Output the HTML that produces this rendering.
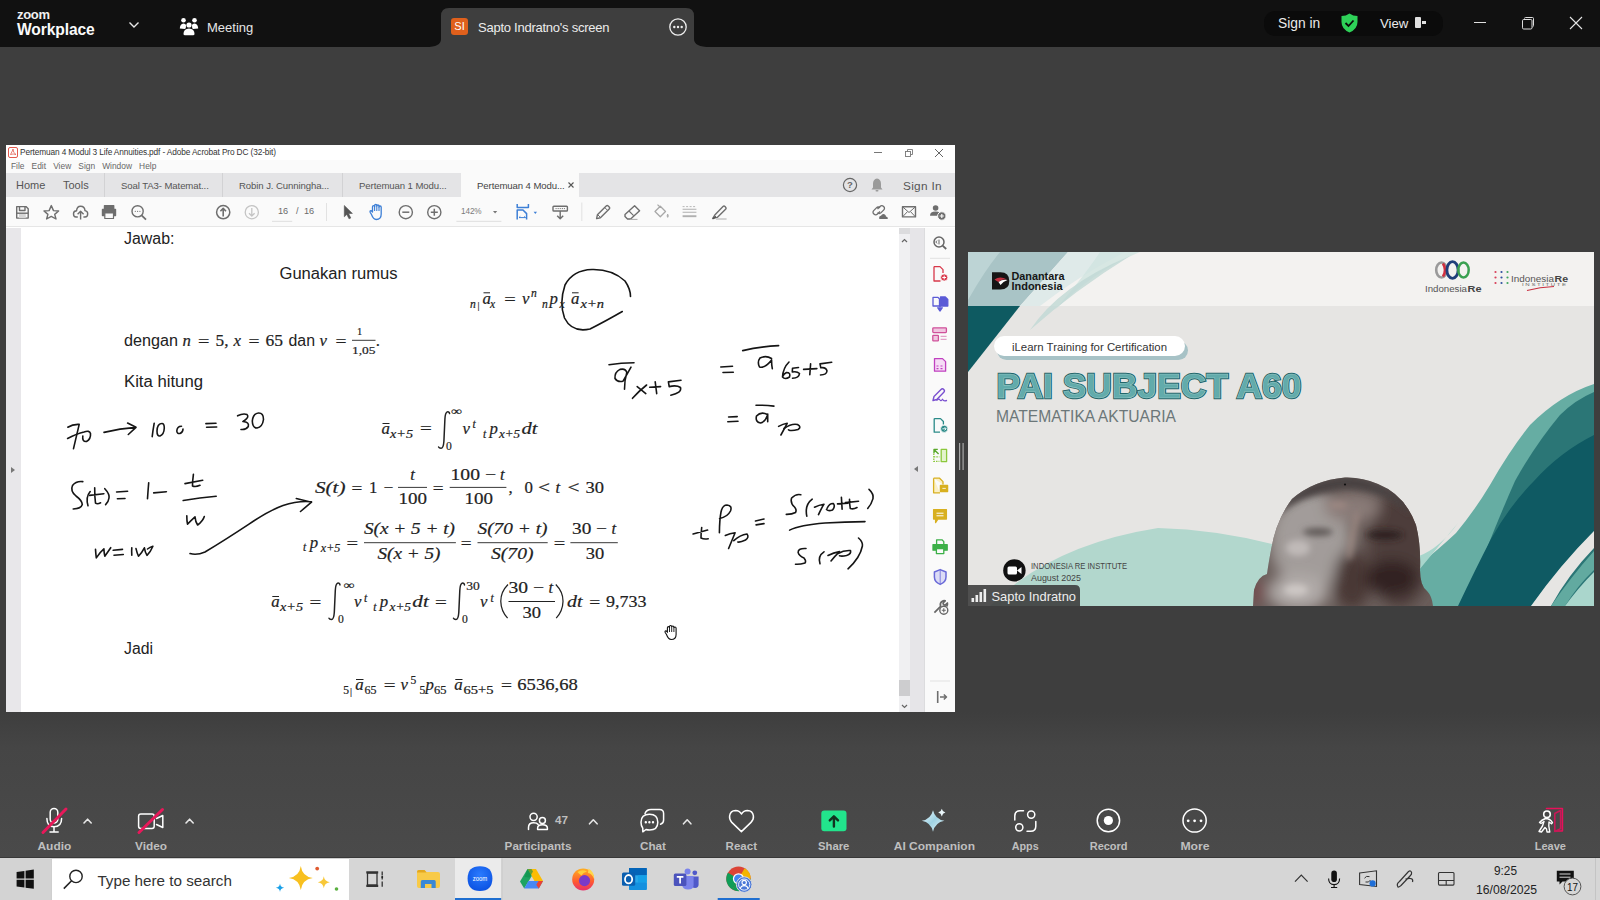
<!DOCTYPE html>
<html><head><meta charset="utf-8">
<style>
*{margin:0;padding:0;box-sizing:border-box}
html,body{width:1600px;height:900px;overflow:hidden;background:#3e3e3e;font-family:"Liberation Sans",sans-serif}
.a{position:absolute}
#top{left:0;top:0;width:1600px;height:47px;background:#111111}
#main{left:0;top:47px;width:1600px;height:811px;background:linear-gradient(#3e3e3e 0,#3e3e3e 665px,#454545 700px,#4a4a4a 811px)}
#acro{left:6px;top:145px;width:949px;height:567px;background:#fff}
#vid{left:968px;top:252px;width:626px;height:354px;background:#e6e6e4;overflow:hidden}
#task{left:0;top:857px;width:1600px;height:43px;background:#d6d6d6;border-top:1px solid #383838}
.t{position:absolute;white-space:nowrap}
</style></head><body>
<div id="main" class="a"></div>
<div id="top" class="a">
 <div class="t" style="left:17px;top:7px;font-size:13px;color:#f0f0f0;font-weight:bold;letter-spacing:-0.3px">zoom</div>
 <div class="t" style="left:17px;top:21px;font-size:15.6px;color:#fafafa;font-weight:bold;letter-spacing:-0.1px">Workplace</div>
 <svg class="a" style="left:128px;top:20px" width="12" height="10"><path d="M1.5 2.5 L6 7 L10.5 2.5" stroke="#e8e8e8" stroke-width="1.4" fill="none"/></svg>
 <svg class="a" style="left:179px;top:17px" width="20" height="19" viewBox="0 0 20 19"><circle cx="4.5" cy="3.2" r="2.3" fill="#fff"/><circle cx="15.5" cy="3.2" r="2.3" fill="#fff"/><circle cx="10" cy="8" r="2.6" fill="#fff"/><path d="M0.8 11.5 Q1 6.8 4.5 6.5 Q6.5 6.5 7 8 Q7.2 11 6 12 Z" fill="#fff"/><path d="M19.2 11.5 Q19 6.8 15.5 6.5 Q13.5 6.5 13 8 Q12.8 11 14 12 Z" fill="#fff"/><path d="M4.5 17 Q4.5 12 10 11.6 Q15.5 12 15.5 17 Q15.5 18.2 14 18.2 L6 18.2 Q4.5 18.2 4.5 17Z" fill="#fff"/></svg>
 <div class="t" style="left:207px;top:20px;font-size:13px;color:#e6e6e6">Meeting</div>
 <svg class="a" style="left:426px;top:8px" width="284" height="39" viewBox="0 0 284 39"><path d="M0 39 Q15 39 15 31 L15 8 Q15 0 23 0 L260 0 Q268 0 268 8 L268 31 Q268 39 284 39 Z" fill="#3e3e3e"/></svg>
 <div class="a" style="left:451px;top:18px;width:17px;height:17px;background:#e0601c;border-radius:3px;color:#fff;font-size:11px;line-height:17px;text-align:center">SI</div>
 <div class="t" style="left:478px;top:20px;font-size:13px;color:#ececec;letter-spacing:-0.25px">Sapto Indratno's screen</div>
 <svg class="a" style="left:668px;top:17px" width="20" height="20"><circle cx="10" cy="10" r="8.2" stroke="#eee" stroke-width="1.3" fill="none"/><circle cx="6.3" cy="10" r="1.2" fill="#eee"/><circle cx="10" cy="10" r="1.2" fill="#eee"/><circle cx="13.7" cy="10" r="1.2" fill="#eee"/></svg>
 <div class="a" style="left:1264px;top:11px;width:179px;height:25px;background:#0b0b0b;border-radius:11px"></div>
 <div class="t" style="left:1278px;top:16px;font-size:13.8px;color:#eaeaea">Sign in</div>
 <svg class="a" style="left:1340px;top:13px" width="19" height="20" viewBox="0 0 19 20"><path d="M9.5 0.5 Q13 3 17.5 3 L17.5 9 Q17.5 16 9.5 19.5 Q1.5 16 1.5 9 L1.5 3 Q6 3 9.5 0.5Z" fill="#2ed158"/><path d="M5.5 10 L8.5 13 L13.5 7.5" stroke="#0b0b0b" stroke-width="1.8" fill="none"/></svg>
 <div class="t" style="left:1380px;top:16px;font-size:13.2px;color:#eaeaea">View</div>
 <div class="a" style="left:1415px;top:17px;width:6px;height:11px;background:#e0e0e0;border-radius:1px"></div>
 <div class="a" style="left:1422px;top:21px;width:4px;height:3px;background:#e0e0e0"></div>
 <div class="a" style="left:1474px;top:22px;width:12px;height:1px;background:#e0e0e0"></div>
 <svg class="a" style="left:1520px;top:15px" width="16" height="16"><rect x="2.5" y="4.5" width="9.5" height="9.5" rx="1.2" stroke="#ddd" stroke-width="1" fill="none"/><path d="M4.5 3.5 Q4.5 2.5 5.5 2.5 L12.5 2.5 Q13.5 2.5 13.5 3.5 L13.5 10.5 Q13.5 11.5 12.5 12" stroke="#ddd" stroke-width="1" fill="none"/></svg>
 <svg class="a" style="left:1569px;top:16px" width="14" height="14"><path d="M1 1 L13 13 M13 1 L1 13" stroke="#e6e6e6" stroke-width="1.1"/></svg>
</div>
<div id="acro" class="a">
 <!-- title bar: abs coords offset by (6,145) -->
 <div class="a" style="left:0;top:0;width:949px;height:15px;background:#fff"></div>
 <svg class="a" style="left:2px;top:2px" width="10" height="11"><rect x="0.5" y="0.5" width="9" height="10" rx="1.5" fill="#fff" stroke="#e0473a" stroke-width="0.9"/><path d="M2.5 7.5 Q5 3 5 2 Q5 6 8 7.5 Q5 6.5 2.5 7.5Z" fill="none" stroke="#e0473a" stroke-width="0.7"/></svg>
 <div class="t" style="left:14px;top:2px;font-size:8.3px;color:#333;letter-spacing:-0.12px">Pertemuan 4 Modul 3 Life Annuities.pdf - Adobe Acrobat Pro DC (32-bit)</div>
 <div class="a" style="left:868px;top:7px;width:8px;height:1px;background:#777"></div>
 <svg class="a" style="left:898px;top:3px" width="10" height="10"><rect x="1.5" y="3.5" width="5" height="5" fill="none" stroke="#777" stroke-width="0.9"/><path d="M3.5 3.5 V1.5 H8.5 V6.5 H6.5" fill="none" stroke="#777" stroke-width="0.9"/></svg>
 <svg class="a" style="left:928px;top:3px" width="10" height="10"><path d="M1 1 L9 9 M9 1 L1 9" stroke="#666" stroke-width="1"/></svg>
 <!-- menu bar -->
 <div class="a" style="left:0;top:15px;width:949px;height:13px;background:#fafafa"></div>
 <div class="t" style="left:5px;top:16px;font-size:8.4px;color:#666;word-spacing:4.8px">File Edit View Sign Window Help</div>
 <!-- tab bar -->
 <div class="a" style="left:0;top:28px;width:949px;height:24px;background:#e4e4e6"></div>
 <div class="t" style="left:10px;top:34px;font-size:11px;color:#555">Home</div>
 <div class="t" style="left:57px;top:34px;font-size:11px;color:#555">Tools</div>
 <div class="a" style="left:98px;top:28px;width:1px;height:24px;background:#d2d2d4"></div>
 <div class="t" style="left:115px;top:35px;font-size:9.6px;color:#555;letter-spacing:-0.1px">Soal TA3- Matemat...</div>
 <div class="a" style="left:216px;top:28px;width:1px;height:24px;background:#d2d2d4"></div>
 <div class="t" style="left:233px;top:35px;font-size:9.6px;color:#555;letter-spacing:-0.1px">Robin J. Cunningha...</div>
 <div class="a" style="left:336px;top:28px;width:1px;height:24px;background:#d2d2d4"></div>
 <div class="t" style="left:353px;top:35px;font-size:9.6px;color:#555;letter-spacing:-0.1px">Pertemuan 1 Modu...</div>
 <div class="a" style="left:455px;top:28px;width:118px;height:24px;background:#fafafa"></div>
 <div class="t" style="left:471px;top:35px;font-size:9.6px;color:#444;letter-spacing:-0.1px">Pertemuan 4 Modu...</div>
 <svg class="a" style="left:561px;top:36px" width="8" height="8"><path d="M1.5 1.5 L6.5 6.5 M6.5 1.5 L1.5 6.5" stroke="#555" stroke-width="1.1"/></svg>
 <svg class="a" style="left:836px;top:32px" width="16" height="16"><circle cx="8" cy="8" r="6.6" fill="none" stroke="#666" stroke-width="1.2"/><text x="8" y="11.3" font-size="9.5" text-anchor="middle" fill="#666" font-family="Liberation Sans" font-weight="bold">?</text></svg>
 <svg class="a" style="left:864px;top:32px" width="14" height="16"><path d="M7 1.5 Q11 2 11 7 L11 10.5 L12.5 12.5 L1.5 12.5 L3 10.5 L3 7 Q3 2 7 1.5Z" fill="#9a9a9a"/><rect x="5.5" y="13" width="3" height="1.6" rx="0.8" fill="#9a9a9a"/></svg>
 <div class="t" style="left:897px;top:34px;font-size:11.8px;color:#555;letter-spacing:0.3px">Sign In</div>
 <!-- toolbar -->
 <div class="a" style="left:0;top:52px;width:949px;height:30px;background:#fafafa;border-bottom:1px solid #e6e6e6"></div>
 <div id="tb"></div>
 <!-- doc area -->
 <div class="a" style="left:0;top:83px;width:15px;height:484px;background:#e8e7ea"></div>
 <div class="a" style="left:5px;top:322px;width:0;height:0;border-top:3.5px solid transparent;border-bottom:3.5px solid transparent;border-left:4px solid #777"></div>
 <div class="a" style="left:15px;top:83px;width:878px;height:484px;background:#fff"></div>
 <div class="a" style="left:893px;top:83px;width:11px;height:484px;background:#f0f0f2"></div>
 <div class="a" style="left:893px;top:83px;width:11px;height:6px;background:#dcdcde"></div>
 <svg class="a" style="left:894px;top:92px" width="9" height="7"><path d="M2 5 L4.5 2.5 L7 5" stroke="#666" stroke-width="1.2" fill="none"/></svg>
 <div class="a" style="left:893px;top:535px;width:11px;height:16px;background:#cdcdcf"></div>
 <svg class="a" style="left:894px;top:558px" width="9" height="7"><path d="M2 2 L4.5 4.5 L7 2" stroke="#666" stroke-width="1.2" fill="none"/></svg>
 <div class="a" style="left:904px;top:83px;width:15px;height:484px;background:#e6e5e8;border-right:1px solid #dcdcde"></div>
 <div class="a" style="left:908px;top:321px;width:0;height:0;border-top:3.5px solid transparent;border-bottom:3.5px solid transparent;border-right:4px solid #777"></div>
 <div class="a" style="left:919px;top:83px;width:30px;height:484px;background:#fafafa"></div>
 <div id="rp"></div>
 <div id="doc"></div>
</div>
<div id="vid" class="a">
<svg class="a" style="left:0;top:0" width="626" height="354" viewBox="968 252 626 354">
 <defs>
  <filter id="bl1" x="-20%" y="-20%" width="140%" height="140%"><feGaussianBlur stdDeviation="6"/></filter>
  <filter id="bl2" x="-20%" y="-20%" width="140%" height="140%"><feGaussianBlur stdDeviation="3"/></filter>
  <filter id="bl3"><feGaussianBlur stdDeviation="0.6"/></filter>
  <filter id="hb" filterUnits="userSpaceOnUse" x="1200" y="440" width="280" height="200"><feGaussianBlur stdDeviation="7"/></filter>
  <filter id="hb2" filterUnits="userSpaceOnUse" x="1200" y="440" width="280" height="200"><feGaussianBlur stdDeviation="3"/></filter>
  <clipPath id="headclip"><path d="M1345 477.5 Q1314 480 1292 499 Q1276 520 1271 550 Q1268 566 1267 574 Q1258 576 1254 590 L1253 606 L1433 606 Q1432 596 1427 591 Q1420 586 1420 570 Q1421 545 1416 525 Q1405 495 1378 484 Q1362 477 1345 477.5Z"/></clipPath>
 </defs>
 <rect x="968" y="252" width="626" height="354" fill="#e6e5e3"/>
 <!-- header -->
 <rect x="968" y="252" width="626" height="54" fill="#f3f2f0"/>
 <path d="M968 252 L1068 252 L1020 306 L968 306 Z" fill="#a9c4c6"/>
 <path d="M968 252 L1000 252 Q985 270 968 300 Z" fill="#c6dcdc" opacity="0.7"/>
 <path d="M1068 252 L1125 252 Q1080 275 1040 306 L1020 306 Z" fill="#dfeae9"/>
 <path d="M1100 252 L1140 252 Q1095 270 1055 310 Q1085 275 1100 252Z" fill="#cfe3e0" opacity="0.8"/>
 <path d="M1030 330 Q1060 285 1130 256 Q1075 290 1030 330Z" fill="#c0d8d4" opacity="0.8"/>
 <path d="M968 306 L1020 306 L968 372 Z" fill="#0e5a61"/>
 <!-- Danantara logo -->
 <path d="M992 272.2 H1000.5 Q1009.3 272.2 1009.3 281 Q1009.3 289.6 1000.5 289.6 H992 Z" fill="#151515"/>
 <path d="M994.5 279.5 Q1000 275.5 1007 279.5 Q1002 278.5 998.5 282 Q996 280.5 994.5 279.5Z" fill="#c03040"/>
 <path d="M998.5 282 Q1002.5 279 1007.5 280 Q1003 281.5 1000.5 285 Z" fill="#fff"/>
 <text x="1011.5" y="280.2" font-family="Liberation Sans" font-weight="bold" font-size="10.3" fill="#161616" textLength="53" lengthAdjust="spacingAndGlyphs">Danantara</text>
 <text x="1011.5" y="289.8" font-family="Liberation Sans" font-weight="bold" font-size="10.3" fill="#161616" textLength="51" lengthAdjust="spacingAndGlyphs">Indonesia</text>
 <!-- IndonesiaRe logo -->
 <ellipse cx="1441.5" cy="270" rx="5.3" ry="7.5" fill="none" stroke="#9a9a9a" stroke-width="2.6"/>
 <path d="M1443 263.5 Q1447 270 1443 276.5" fill="none" stroke="#d03040" stroke-width="2.6"/>
 <ellipse cx="1452.5" cy="270" rx="5.6" ry="8.3" fill="none" stroke="#1f3f7a" stroke-width="2.8"/>
 <ellipse cx="1463.5" cy="270" rx="5.2" ry="7.5" fill="none" stroke="#3aa050" stroke-width="2.5"/>
 <text x="1425" y="292" font-family="Liberation Sans" font-size="9.6" fill="#555" textLength="42" lengthAdjust="spacingAndGlyphs">Indonesia</text>
 <text x="1467.5" y="292" font-family="Liberation Sans" font-weight="bold" font-size="9.6" fill="#444" textLength="14" lengthAdjust="spacingAndGlyphs">Re</text>
 <g fill="#d8405a"><circle cx="1495.5" cy="272" r="1.1"/><circle cx="1495.5" cy="277.5" r="1.1"/><circle cx="1495.5" cy="283" r="1.1"/></g>
 <g fill="#3050a0"><circle cx="1501.5" cy="272" r="1.1"/><circle cx="1501.5" cy="277.5" r="1.1"/><circle cx="1501.5" cy="283" r="1.1"/></g>
 <g fill="#40a860"><circle cx="1507.5" cy="272" r="1.1"/><circle cx="1507.5" cy="277.5" r="1.1"/><circle cx="1507.5" cy="283" r="1.1"/></g>
 <text x="1511" y="281.5" font-family="Liberation Sans" font-size="9.4" fill="#555" textLength="43" lengthAdjust="spacingAndGlyphs">Indonesia</text>
 <text x="1554.5" y="281.5" font-family="Liberation Sans" font-weight="bold" font-size="9.4" fill="#444" textLength="13.5" lengthAdjust="spacingAndGlyphs">Re</text>
 <text x="1522" y="285.5" font-family="Liberation Sans" font-size="3.6" fill="#666" textLength="44" lengthAdjust="spacingAndGlyphs">I N S T I T U T E</text>
 <path d="M1527 290.5 Q1540 287 1554 286.5" fill="none" stroke="#c83040" stroke-width="1.2"/>
 <!-- pill -->
 <rect x="997" y="341" width="191" height="19" rx="9.5" fill="#a7c2c6"/>
 <rect x="994" y="336" width="191" height="20" rx="10" fill="#fff"/>
 <text x="1012" y="351.3" font-family="Liberation Sans" font-size="11" fill="#333" textLength="155" lengthAdjust="spacingAndGlyphs">iLearn Training for Certification</text>
 <!-- title -->
 <text x="996.5" y="397.5" font-family="Liberation Sans" font-weight="bold" font-size="34.5" fill="#62abab" stroke="#22666a" stroke-width="2.4" paint-order="stroke" textLength="305" lengthAdjust="spacingAndGlyphs">PAI SUBJECT A60</text>
 <text x="996.5" y="397.5" font-family="Liberation Sans" font-weight="bold" font-size="34.5" fill="none" stroke="#bfe0de" stroke-width="0.6" textLength="305" lengthAdjust="spacingAndGlyphs" opacity="0.6">PAI SUBJECT A60</text>
 <text x="996" y="422" font-family="Liberation Sans" font-size="16" fill="#6c7779" textLength="180" lengthAdjust="spacingAndGlyphs">MATEMATIKA AKTUARIA</text>
 <!-- bottom hill -->
 <path d="M990 606 Q1050 545 1158 528 Q1230 530 1300 552 L1300 606 Z" fill="#b2d7cd"/>
 <!-- right waves -->
 <path d="M1390 606 Q1405 580 1419 565 Q1440 548 1456 533 Q1475 510 1490 485 Q1510 450 1530 425 Q1560 395 1594 384 L1594 606 Z" fill="#66ada3"/>
 <path d="M1419 570 Q1438 547 1458 523 Q1440 548 1419 556Z" fill="#a8d6cc"/>
 <path d="M1470 606 Q1478 575 1487 548 Q1500 515 1515 481 Q1535 445 1560 415 Q1575 400 1594 392 L1594 606 Z" fill="#2b7676"/>
 <path d="M1458 606 Q1475 570 1491 539 Q1510 505 1534 481 Q1560 452 1594 435 L1594 531 Q1560 565 1531 606 Z" fill="#0f5a63"/>
 <path d="M1531 606 Q1560 565 1594 531 L1594 548 Q1568 575 1551 606Z" fill="#e6e5e3"/>
 <path d="M1551 606 Q1570 578 1594 551 L1594 570 Q1578 585 1565 606Z" fill="#62aaa0"/>
 <path d="M1565 606 Q1578 588 1594 572 L1594 606Z" fill="#aad6cc"/>
 <!-- head -->
 <g clip-path="url(#headclip)">
  <rect x="1250" y="470" width="190" height="140" fill="#6a5e5b"/>
  <g filter="url(#hb)">
   <ellipse cx="1310" cy="540" rx="40" ry="50" fill="#a29c9a"/>
   <ellipse cx="1298" cy="592" rx="30" ry="18" fill="#b0aaa8"/>
   <ellipse cx="1400" cy="548" rx="32" ry="60" fill="#4e3d3a"/>
   <ellipse cx="1352" cy="508" rx="28" ry="14" fill="#8a7c78"/>
   <ellipse cx="1352" cy="580" rx="18" ry="30" fill="#4a3734"/>
   <ellipse cx="1392" cy="578" rx="26" ry="18" fill="#322422"/>
   <ellipse cx="1258" cy="592" rx="5" ry="12" fill="#7a3a40"/>
  </g>
  <g filter="url(#hb2)">
   <path d="M1345 476 Q1310 479 1290 497 Q1282 505 1278 515 Q1300 495 1345 489 Q1385 490 1412 516 Q1402 493 1378 483 Q1362 476 1345 476Z" fill="#4a4242"/>
   <path d="M1356 512 Q1350 530 1347 558 L1351 560 Q1355 535 1359 514Z" fill="#a89088" opacity="0.8"/>
   <ellipse cx="1298" cy="548" rx="12" ry="8" fill="#c0bab8"/>
   <ellipse cx="1296" cy="590" rx="12" ry="6" fill="#cdc7c5"/>
   <ellipse cx="1318" cy="532" rx="15" ry="4" fill="#5e5856"/>
   <ellipse cx="1385" cy="535" rx="18" ry="5" fill="#2e2220"/>
   <ellipse cx="1338" cy="505" rx="10" ry="3" fill="#a08a84"/>
  </g>
 </g>
 <circle cx="1345" cy="484.5" r="1.1" fill="#111"/>
 <!-- institute -->
 <circle cx="1014.4" cy="570.4" r="11.2" fill="#111"/>
 <rect x="1007.5" y="566.5" width="9.5" height="8" rx="1.5" fill="#fff"/><path d="M1017 570.5 L1021.5 567 V574 Z" fill="#fff"/>
 <text x="1031" y="568.5" font-family="Liberation Sans" font-size="8.6" fill="#444" textLength="96" lengthAdjust="spacingAndGlyphs">INDONESIA RE INSTITUTE</text>
 <text x="1031" y="580.5" font-family="Liberation Sans" font-size="9" fill="#444" textLength="50" lengthAdjust="spacingAndGlyphs">August 2025</text>
 <!-- name label -->
 <path d="M968 585 H1075 Q1080 585 1080 590 V606 H968 Z" fill="#3a3a3a" opacity="0.88"/>
 <rect x="971.5" y="598" width="2.6" height="4" fill="#eee"/><rect x="975.5" y="595" width="2.6" height="7" fill="#eee"/><rect x="979.5" y="592" width="2.6" height="10" fill="#eee"/><rect x="983.5" y="589" width="2.6" height="13" fill="#eee"/>
 <text x="991.5" y="601" font-family="Liberation Sans" font-size="12.4" fill="#eeeeee" textLength="84.5" lengthAdjust="spacingAndGlyphs">Sapto Indratno</text>
</svg>
</div>
<div id="task" class="a"></div>
<!--HW-->
<svg class="a" style="left:0;top:0" width="1600" height="900" viewBox="0 0 1600 900">
<g fill="none" stroke="#151515" stroke-width="1.6" stroke-linecap="round" stroke-linejoin="round">
 <!-- circle -->
 <path d="M622.3 311.5 Q604 322 590 329 Q572 333 564.5 318 Q559 303 565 285 Q573 270 592 269.5 Q612 269 625 281 Q630.5 289 630.5 296.5"/>
 <!-- 70 -> 100 = 30 -->
 <path d="M67.8 427.2 Q73 424 79.2 424.4 L73.5 448.6"/>
 <path d="M67.6 438.5 Q77 433.5 84 432 Q89.5 430 90.5 433.5 Q91 439 86.5 441.5 Q82 442 82.8 436"/>
 <path d="M104 432.4 Q120 428.6 136 427.4 M127.6 423 L136 427.3 L128.3 434.5"/>
 <path d="M154.2 423.2 Q153 430 152.2 436.6"/>
 <path d="M161.5 423.5 Q157.2 424 157 431 Q157 436.5 160 436 Q164 434.5 164.3 428 Q164.3 423 161.5 423.5Z"/>
 <path d="M181.5 426.2 Q177 426.2 176.8 431 Q177 434 180 433.5 Q183 432.5 183 429"/>
 <path d="M205.9 423.6 L216 423.2 M206.6 427.3 L216.7 427"/>
 <path d="M237.6 415.8 Q243 413 247 414.5 Q249.5 417 244.5 420.5 Q242.5 421.8 243 421.5 Q249.5 422 248.3 426.5 Q246 430 241 429.5"/>
 <path d="M258.5 413 Q253 413.5 252.3 421 Q252.5 428 257 428 Q262.5 427 263.5 419.5 Q263.5 412.8 258.5 413Z"/>
 <!-- S(t) = 1- t/w -->
 <path d="M82.8 481.6 Q76 480.8 72.5 485.5 Q70 491 76 496 Q82 500.5 82.3 504.5 Q81 508.8 73.2 509"/>
 <path d="M90.2 491.5 Q85.5 497 88 505.8"/>
 <path d="M94.7 487.8 Q94.6 497 95.5 503.2 Q97.5 504.5 100.6 502.8 M89.6 495.4 L103.9 493.7"/>
 <path d="M104.8 488.7 Q109.8 494 109 498 Q108.5 502 105.6 504.7"/>
 <path d="M116.6 492 L127.6 491.2 M117.4 498.8 L125 498.5"/>
 <path d="M148.7 482.8 Q148 491 147.5 498.8 M153.7 492.9 L166.4 491.7"/>
 <path d="M193.4 474.3 Q192.5 481 192.5 486 Q195.5 487.2 200 485.3 M185 483.6 L202.7 480.2"/>
 <path d="M183.2 500.5 Q200 497.5 216.2 496.3"/>
 <path d="M186.8 515.7 Q186.8 521 187.5 524.1 Q191.5 520 195 516.8 Q195.5 522 197.6 525 Q203 521 204.3 516.5"/>
 <!-- big arrow -->
 <path d="M190 553.6 Q197 555.5 205 552 Q225 540 249 524.1 Q268 511 283 505.6 Q298 500.5 311.5 501.8 M296.3 498.5 L311.5 502.2 L300.5 511.5"/>
 <!-- w=1w -->
 <path d="M95.5 549.4 Q95.8 554 96.3 557.9 Q100 552 103.9 548.8 Q104 552.5 104.8 556.2 Q108.5 551 110.7 547.7"/>
 <path d="M113.2 550.3 L122.5 549.4 M114 555.3 L123.3 554.5"/>
 <path d="M131.8 547.7 Q131.5 551 131.8 555.3"/>
 <path d="M136 548.6 Q137 553 138.5 556.2 Q142 552.5 144.4 547.8 Q145 552 147 555.3 Q150.5 552 152.9 546.2 Q150 547 147.5 549"/>
 <!-- abar x+5 = abar 65+5 = abar 70 -->
 <path d="M609 364.7 Q621 363 634 362.8"/>
 <path d="M631 367.2 Q627 374.5 623 381.2 Q617.5 382.5 615 378.5 Q614.5 372 620 369.4 Q625.5 368 626.8 372.5 Q624.5 380 624.5 389.3"/>
 <path d="M632.5 398.3 Q639 391 646.6 385 M637.2 386.6 Q641.5 390 645.8 393.6"/>
 <path d="M655.2 381.9 L656.7 393.6 M649.7 387.3 L660.6 386.6"/>
 <path d="M681 380.3 L668.4 381.9 L669.2 386.6 Q676.5 384.8 680.5 387.5 Q682 393 670.8 395.2"/>
 <path d="M720.8 367 L732.5 366.2 M723 372.5 L733.3 372.2"/>
 <path d="M742.7 350.6 Q760 346.5 778.6 345.6"/>
 <path d="M771.5 358.5 Q766 355 760 358 Q757 362 759.5 367 Q765 368.5 771.6 360 Q771.5 365 772.3 368.6"/>
 <path d="M789 362 Q783 368 782.5 377 Q785 380 789.5 377 Q791 372.5 786.5 372.5 Q783.5 374 783 376"/>
 <path d="M798.5 367.5 L792.5 368.2 L792.3 372 Q797 371 799.5 373.5 Q799 378 792.5 378.2"/>
 <path d="M810.6 363.9 L809.8 374.8 M803.6 369.4 L816.9 368.6"/>
 <path d="M831.7 362.3 L820 363.9 L820.8 367.8 Q826 367 827 371 Q826.5 374.8 820.5 375"/>
 <path d="M728.6 417 L737.2 416.6 M727.8 421.7 L738 421.2"/>
 <path d="M756 405.3 Q765 405 773.9 406.1"/>
 <path d="M767.5 414.5 Q761 411 756.5 416 Q755 422 760.5 423 Q766 421.5 767.7 414 Q767.7 418 767.7 421.7"/>
 <path d="M778.6 426.4 Q783 424 787.2 423.3 L780.9 435"/>
 <path d="M784 428.5 Q792 423 797.5 424.5 Q802 427 798 429.5 Q791 431.5 788.5 429.8"/>
 <!-- tp70 = S(70+t)/S(70) -->
 <path d="M693.1 534 L707.6 530.1 M701.7 527.5 Q701 533 701 538 Q704 539.5 708.2 538.7"/>
 <path d="M719.4 532.7 Q719.5 520 721 512 Q722.5 505 727 505 Q732.5 505.5 730.5 511 Q727.5 517 719.6 518.5"/>
 <path d="M725.3 535.4 Q730 533.5 735.1 532.7 L728.6 548.5 M733.8 540.6 Q740 535 747 534 Q749.5 537.2 745.5 540 Q740.5 542.5 737.8 542"/>
 <path d="M755.5 521 L764 519 M756.1 524.9 L764 523.6"/>
 <path d="M800.8 494.7 Q796 493.5 791.6 498 Q790 503 794.5 507 Q797 510 795.5 512.5 Q792 514.5 786.3 514.4"/>
 <path d="M812.2 499.2 Q804.5 505 806.8 516.2"/>
 <path d="M814.5 507.2 Q819 505 824 504.2 Q821 509 818.5 514.6 M827 508.5 Q829.5 503.2 833.5 503.6 Q835.5 506.5 832.5 510 Q828.5 511.5 826.5 509.5"/>
 <path d="M841.4 497.3 L842.1 509.1 M837.5 503.9 L848 503.2"/>
 <path d="M849.5 499.3 Q849.5 505 850.3 508.5 Q853.5 509.5 857 507.5 M845.4 502.6 L858.5 501.2"/>
 <path d="M869 489.4 Q874 494 873 498.6 Q871.5 504 867.7 508.5"/>
 <path d="M789.6 530.1 Q800 525 825 523 Q845 521.8 865 521.6"/>
 <path d="M806 548.5 Q798 548 798.1 552.4 Q799 556 804 558 Q806.5 561 805 563 Q800 564.5 795.5 564.2"/>
 <path d="M824 551.8 Q817.5 556 820 563.8"/>
 <path d="M828 555.5 Q833.5 552.5 839.5 551.6 Q835 556 831 561 M837.5 553.8 Q844 550 850.5 550.5 Q851.5 554 846.5 555.5 Q842 556.5 839.5 555.8"/>
 <path d="M858.5 538 Q863 542 862.4 546 Q860 558 848 568.8"/>
</g>
</svg>
<!--/HW-->
<!--EXTRA-->
<svg class="a" style="left:0;top:0" width="1600" height="900" viewBox="0 0 1600 900">
 <path d="M666.5 634.5 L665.2 632.5 Q664.6 631 666 630.8 L667.4 632 V627.8 Q667.4 626.6 668.5 626.6 Q669.5 626.6 669.5 627.8 V626.6 Q669.5 625.5 670.6 625.5 Q671.7 625.5 671.7 626.6 V627 Q671.7 626 672.8 626 Q673.9 626 673.9 627.2 V628 Q673.9 627 675 627 Q676.1 627 676.1 628.2 V634.5 Q676.1 639.5 671.2 639.5 Q668.3 639.5 666.5 634.5 Z" fill="#fff" stroke="#111" stroke-width="1.1"/>
 <path d="M669.5 627 V632 M671.7 626.8 V632 M673.9 627.6 V632" stroke="#111" stroke-width="0.9"/>
 <rect x="959" y="443" width="1.2" height="27" fill="#a8a8a8"/><rect x="962.5" y="443" width="1.2" height="27" fill="#a8a8a8"/>
</svg>
<!--/EXTRA-->
<!--BOTTOM-->
<svg class="a" style="left:0;top:0" width="1600" height="900" viewBox="0 0 1600 900">
 <defs>
  <linearGradient id="aig" x1="0" y1="0" x2="1" y2="1"><stop offset="0" stop-color="#f4fbff"/><stop offset="0.5" stop-color="#9fd3e4"/><stop offset="1" stop-color="#e8f6fa"/></linearGradient>
  <linearGradient id="ffg" x1="0" y1="0" x2="0" y2="1"><stop offset="0" stop-color="#ffb020"/><stop offset="0.6" stop-color="#ff5a30"/><stop offset="1" stop-color="#e8306a"/></linearGradient>
  <radialGradient id="zmg" cx="0.5" cy="0.35" r="0.7"><stop offset="0" stop-color="#2a7bff"/><stop offset="1" stop-color="#0a50e0"/></radialGradient>
 </defs>
 <g fill="none" stroke="#ffffff" stroke-width="1.5" stroke-linecap="round" stroke-linejoin="round">
  <!-- audio -->
  <rect x="50.2" y="808.4" width="7.6" height="14.6" rx="3.8"/>
  <path d="M46.9 818.5 Q46.9 826.8 54 826.8 Q61.6 826.8 61.6 818.5"/><path d="M54 826.8 V832 M50 832 H58.2"/>
  <path d="M43 832.5 L66 809" stroke="#e8185a" stroke-width="3"/>
  <path d="M84 823 L87.6 819.2 L91.2 823" stroke="#e6e6e6" stroke-width="1.6"/>
  <!-- video -->
  <rect x="138.6" y="814" width="15.6" height="14.5" rx="2.2"/><path d="M156.5 818.5 L162.8 815.5 V827.5 L156.5 824.5"/>
  <path d="M139 832.5 L162.5 809.5" stroke="#e8185a" stroke-width="3"/>
  <path d="M186 823 L189.6 819.2 L193.2 823" stroke="#e6e6e6" stroke-width="1.6"/>
  <!-- participants -->
  <circle cx="533.6" cy="816.8" r="3.6"/><path d="M528.5 829.6 V827.5 Q528.5 822.8 533.6 822.8 Q537 822.8 538.2 824.5"/>
  <circle cx="542.4" cy="820.4" r="3"/><path d="M537.6 829.6 V828.2 Q537.6 824.8 542.4 824.8 Q547.4 824.8 547.4 828.2 V829.6 Z"/>
  <path d="M589.5 823.8 L593.3 819.8 L597.1 823.8" stroke="#e6e6e6" stroke-width="1.6"/>
  <!-- chat -->
  <path d="M645 813.5 Q646.5 809.5 651 809.5 H659.5 Q663.6 809.5 663.6 813.5 V820 Q663.6 823.5 660.5 824.2"/>
  <path d="M649.5 814.2 Q657.8 814.2 657.8 822.2 Q657.8 830 649.5 830 Q647.6 830 646 829.5 L642.8 831.8 V828.2 Q641 826 641 822.2 Q641 814.2 649.5 814.2 Z" fill="#4a4a4a"/>
  <circle cx="645.8" cy="822.3" r="0.6" fill="#fff" stroke-width="1.2"/><circle cx="649.4" cy="822.3" r="0.6" fill="#fff" stroke-width="1.2"/><circle cx="653" cy="822.3" r="0.6" fill="#fff" stroke-width="1.2"/>
  <path d="M683.5 823.8 L687.2 819.8 L690.9 823.8" stroke="#e6e6e6" stroke-width="1.6"/>
  <!-- react -->
  <path d="M741.4 831.6 L731.8 822.4 Q729.2 819.6 729.6 815.8 Q730.4 810.6 735.6 810.4 Q739.4 810.4 741.4 814 Q743.6 810.4 747.4 810.4 Q752.6 810.6 753.4 815.8 Q753.8 819.6 751 822.4 Z"/>
  <!-- apps -->
  <path d="M1014.8 820 V816 Q1014.8 810.8 1020 810.8 H1023.5"/><circle cx="1031.2" cy="814.6" r="3.6"/><circle cx="1019.3" cy="827.3" r="3.6"/><path d="M1035.8 821.5 V826.2 Q1035.8 831.2 1030.6 831.2 H1027"/>
  <!-- record -->
  <circle cx="1108.4" cy="820.5" r="11.2"/><circle cx="1108.4" cy="820.5" r="4.6" fill="#fff" stroke="none"/>
  <!-- more -->
  <circle cx="1194.6" cy="820.5" r="11.6"/>
  <circle cx="1188.2" cy="820.8" r="1.4" fill="#fff" stroke="none"/><circle cx="1194.6" cy="820.8" r="1.4" fill="#fff" stroke="none"/><circle cx="1201" cy="820.8" r="1.4" fill="#fff" stroke="none"/>
  <!-- leave -->
  <path d="M1546.5 808.5 H1562.4 V831 H1554.8" stroke="#e8105a" stroke-width="1.6"/><path d="M1554.8 813.5 L1560.6 810.5 V828.6 L1554.8 831.5 Z" stroke="#c81858" stroke-width="1.6"/>
  <circle cx="1547" cy="814.3" r="3.3" stroke-width="1.6"/>
  <path d="M1545.5 818.5 Q1541.5 820 1539.5 822.5 L1541 823.5 L1544 821.5 L1542.5 826 L1539 831.5 L1541.5 832 L1545 827.5 L1546.5 829 L1547 832 L1549.8 832 L1548.8 826 L1549 822 L1551.5 823.8 L1552.5 822.5 Q1550 818.5 1545.5 818.5Z" stroke-width="1.4"/>
 </g>
 <!-- share -->
 <rect x="821.3" y="810.6" width="25.2" height="20.6" rx="3" fill="#22e48c"/>
 <path d="M833.9 826.5 V816.5 M829.8 820.4 L833.9 816.3 L838 820.4" stroke="#13301f" stroke-width="2.4" fill="none" stroke-linecap="round" stroke-linejoin="round"/>
 <!-- AI -->
 <path d="M933 810.2 Q935 819 944.4 820.8 Q935 822.6 933 831.8 Q931 822.6 921.8 820.8 Q931 819 933 810.2Z" fill="url(#aig)"/>
 <path d="M941.8 808.8 Q942.5 812 945.4 812.6 Q942.5 813.2 941.8 816.4 Q941.1 813.2 938.2 812.6 Q941.1 812 941.8 808.8Z" fill="#eaf6fa"/>
 <!-- labels -->
 <g font-family="Liberation Sans" font-weight="bold" font-size="11.6" fill="#bfbfbf">
  <text x="37.5" y="849.6" textLength="33.8" lengthAdjust="spacingAndGlyphs">Audio</text>
  <text x="135" y="849.6" textLength="32" lengthAdjust="spacingAndGlyphs">Video</text>
  <text x="504.6" y="849.6" textLength="66.8" lengthAdjust="spacingAndGlyphs">Participants</text>
  <text x="555" y="824.2" font-size="11" textLength="13" lengthAdjust="spacingAndGlyphs">47</text>
  <text x="640" y="849.6" textLength="26" lengthAdjust="spacingAndGlyphs">Chat</text>
  <text x="725.6" y="849.6" textLength="31.4" lengthAdjust="spacingAndGlyphs">React</text>
  <text x="818" y="849.6" textLength="31.4" lengthAdjust="spacingAndGlyphs">Share</text>
  <text x="893.8" y="849.6" textLength="81.2" lengthAdjust="spacingAndGlyphs">AI Companion</text>
  <text x="1011.7" y="849.6" textLength="27" lengthAdjust="spacingAndGlyphs">Apps</text>
  <text x="1089.7" y="849.6" textLength="37.9" lengthAdjust="spacingAndGlyphs">Record</text>
  <text x="1180.4" y="849.6" textLength="29.2" lengthAdjust="spacingAndGlyphs">More</text>
  <text x="1534.7" y="849.6" textLength="31.3" lengthAdjust="spacingAndGlyphs">Leave</text>
 </g>
 <!-- taskbar -->
 <rect x="0" y="858" width="51" height="42" fill="#d3d3d3"/>
 <rect x="51" y="858" width="298" height="42" fill="#cfcfcf"/><rect x="52" y="859" width="297" height="41" fill="#ffffff"/>
 <path d="M16.6 872 L24.4 870.9 V878.6 H16.6 Z M25.6 870.7 L33.8 869.6 V878.6 H25.6 Z M16.6 879.8 H24.4 V887.5 L16.6 886.4 Z M25.6 879.8 H33.8 V888.8 L25.6 887.7 Z" fill="#111"/>
 <circle cx="76" cy="876.4" r="6.2" fill="none" stroke="#222" stroke-width="1.4"/><path d="M71.6 880.8 L63.8 888.6" stroke="#222" stroke-width="1.6"/>
 <text x="97.4" y="885.6" font-family="Liberation Sans" font-size="15.2" fill="#333" textLength="134.5" lengthAdjust="spacingAndGlyphs">Type here to search</text>
 <path d="M300.8 866 Q302.2 876.5 312.8 878 Q302.2 879.5 300.8 890 Q299.4 879.5 288.8 878 Q299.4 876.5 300.8 866Z" fill="#f8c020"/>
 <path d="M323.8 876.3 Q324.5 881.5 329.8 882.3 Q324.5 883 323.8 888.3 Q323.1 883 317.8 882.3 Q323.1 881.5 323.8 876.3Z" fill="#f8c838"/>
 <path d="M280 883.6 Q280.4 887.4 284.2 887.8 Q280.4 888.2 280 892 Q279.6 888.2 275.8 887.8 Q279.6 887.4 280 883.6Z" fill="#1aa0e8"/>
 <circle cx="317.2" cy="868.6" r="1.9" fill="#e05a30"/><circle cx="336.5" cy="889" r="1.8" fill="#5ab040"/>
 <!-- task view -->
 <g stroke="#333" fill="none"><rect x="367.5" y="873" width="9.5" height="12" stroke-width="1.3"/><path d="M366.3 872.3 H378.2 M366.3 885.8 H378.2" stroke-width="2.2"/><path d="M382.2 871.5 V875.5 M382.2 877.5 V879.5 M382.2 881.5 V886.8" stroke-width="1.3"/></g>
 <circle cx="382.2" cy="877" r="1" fill="#111"/>
 <!-- explorer -->
 <path d="M417 872 Q417 870 419 870 H424.5 L426.5 872 H438 Q440 872 440 874 V886 Q440 888 438 888 H419 Q417 888 417 886Z" fill="#f8ca48"/>
 <path d="M417 872 Q417 870 419 870 H424.5 L426.5 872.5 H417Z" fill="#e3a820"/>
 <path d="M420.8 888 V881.5 Q420.8 880 422.3 880 H434.2 Q435.7 880 435.7 881.5 V888 H431.5 V884 H425 V888 Z" fill="#3a88d6"/>
 <!-- zoom active -->
 <rect x="455" y="858.3" width="46.3" height="41.7" fill="#ebebeb"/>
 <rect x="455" y="898" width="46.3" height="2" fill="#1f6fd0"/>
 <path d="M480 866.2 Q492.4 866.2 492.4 878.6 Q492.4 891 480 891 Q467.6 891 467.6 878.6 Q467.6 866.2 480 866.2Z" fill="url(#zmg)"/>
 <text x="480" y="880.8" font-family="Liberation Sans" font-size="6.6" fill="#fff" text-anchor="middle" textLength="14.5" lengthAdjust="spacingAndGlyphs">zoom</text>
 <rect x="501.5" y="858.3" width="1" height="41.7" fill="#c8c8c8"/>
 <!-- drive -->
 <path d="M527.5 869 H536 L543 881 L538.8 888.5 Z" fill="#fbbc04"/>
 <path d="M527.5 869 L520 881.5 L524.2 888.5 L531.8 876 Z" fill="#1ea362"/>
 <path d="M524.2 888.5 H538.8 L543 881 H528.4 Z" fill="#4688f4"/>
 <path d="M538.8 888.5 L543 881 H538.5 L536.3 884.8Z" fill="#e94235"/>
 <path d="M527.5 869 H531.5 L533 871.5 L529.5 877.5 L524.5 877 Z" fill="#0c8f48" opacity="0.6"/>
 <!-- firefox -->
 <circle cx="583.2" cy="879.4" r="11" fill="url(#ffg)"/>
 <circle cx="584.5" cy="880.6" r="5.6" fill="#7a3ac8"/>
 <path d="M577.5 872 Q582 869 587 871.5 Q583 872.5 581.5 875.5 Q579.5 874 577.5 872Z" fill="#ffcf3a"/>
 <path d="M588.5 868.5 Q594.5 872 594 879 Q592 873.5 588 873 Z" fill="#ffd64a"/>
 <!-- outlook -->
 <rect x="629" y="868" width="17.8" height="22" rx="1.5" fill="#28a8ea"/>
 <rect x="629" y="868" width="17.8" height="7.3" fill="#0364b8"/><rect x="637.9" y="875.3" width="8.9" height="7.3" fill="#14a0e8"/><rect x="629" y="882.6" width="17.8" height="7.4" rx="1" fill="#1490df"/>
 <rect x="622" y="872.6" width="13.2" height="13.2" rx="1.5" fill="#0a5fb0"/>
 <ellipse cx="628.6" cy="879.2" rx="3.6" ry="4.2" fill="none" stroke="#fff" stroke-width="1.8"/>
 <!-- teams -->
 <circle cx="687.6" cy="871.5" r="3" fill="#7b83eb"/><circle cx="694.8" cy="872.8" r="2.4" fill="#5059c9"/>
 <path d="M690.5 876.5 H698.6 V884.2 Q698.6 888 695 888 Q692.5 888 690.5 886 Z" fill="#5059c9"/>
 <path d="M682 876 H693.6 V885 Q693.6 889.6 688 889.6 Q683 889.6 682 885 Z" fill="#7b83eb"/>
 <rect x="673.8" y="873.5" width="12.6" height="12.6" rx="1.5" fill="#4b53bc"/>
 <path d="M676.8 876.8 H683.4 M680.1 876.8 V883.6" stroke="#fff" stroke-width="1.7"/>
 <!-- chrome -->
 <circle cx="738.5" cy="878.8" r="12.2" fill="#db4437"/>
 <path d="M738.5 878.8 L727.9 872.7 A12.2 12.2 0 0 0 732.4 889.4 Z" fill="#0f9d58"/>
 <path d="M738.5 878.8 L732.4 889.4 A12.2 12.2 0 0 0 750.7 878.8 Z" fill="#0f9d58"/>
 <path d="M738.5 878.8 L750.7 878.8 A12.2 12.2 0 0 0 744.6 868.2 L738.5 878.8Z" fill="#f4b400"/>
 <circle cx="738.5" cy="878.8" r="5.6" fill="#fff"/><circle cx="738.5" cy="878.8" r="4.4" fill="#4285f4"/>
 <circle cx="744.2" cy="884.6" r="7.8" fill="#4a78d8" stroke="#dcdcdc" stroke-width="1"/>
 <circle cx="744.2" cy="882.6" r="2.2" fill="none" stroke="#fff" stroke-width="1.1"/><path d="M740.2 889 Q740.8 885.6 744.2 885.6 Q747.6 885.6 748.2 889" fill="none" stroke="#fff" stroke-width="1.1"/>
 <circle cx="744.2" cy="884.6" r="5.6" fill="none" stroke="#fff" stroke-width="0.9"/>
 <rect x="717.7" y="898" width="42" height="2" fill="#1f6fd0"/>
 <!-- tray -->
 <path d="M1295 881.6 L1301.3 875 L1307.6 881.6" stroke="#333" stroke-width="1.2" fill="none"/>
 <rect x="1331.3" y="870.6" width="5.6" height="11.5" rx="2.8" fill="#111"/><path d="M1328.6 878.5 Q1328.6 884.6 1334.1 884.6 Q1339.6 884.6 1339.6 878.5 M1334.1 884.6 V887.4 M1331 887.5 H1337.2" stroke="#111" stroke-width="1.1" fill="none"/>
 <path d="M1359.6 873 L1376.5 870.8 V886.5 L1359.6 884.5 Z" fill="none" stroke="#333" stroke-width="1.1"/>
 <path d="M1364.5 878.2 Q1366 875.5 1369.5 876.6 M1370.5 880 Q1369 883 1365.5 882" stroke="#333" stroke-width="1" fill="none"/>
 <circle cx="1372.6" cy="883.4" r="3.1" fill="#1f6fd8"/>
 <path d="M1398 887 Q1396 884 1399.5 881.5 L1408.5 871.5 Q1410.8 870 1411.6 872.6 Q1412 874 1410 876 L1401 885.5 Q1398.5 887.5 1398 887Z M1405.5 879 Q1414 877 1412.5 882" stroke="#333" stroke-width="1.2" fill="none"/>
 <rect x="1438.5" y="872.5" width="15.5" height="12.6" rx="1" fill="none" stroke="#333" stroke-width="1.1"/><path d="M1438.5 880.5 H1454 M1446.2 880.5 V885" stroke="#333" stroke-width="1.1"/>
 <text x="1494" y="874.8" font-family="Liberation Sans" font-size="12" fill="#222" textLength="23" lengthAdjust="spacingAndGlyphs">9:25</text>
 <text x="1476" y="893.7" font-family="Liberation Sans" font-size="12" fill="#222" textLength="61" lengthAdjust="spacingAndGlyphs">16/08/2025</text>
 <path d="M1556.8 870.8 H1573.8 V881.6 H1562.5 L1559.5 884.5 V881.6 H1556.8 Z" fill="#111"/>
 <path d="M1559.5 874 H1570.5 M1559.5 877.2 H1570.5" stroke="#d6d6d6" stroke-width="1"/>
 <circle cx="1572.5" cy="886.5" r="8.4" fill="#d6d6d6" stroke="#555" stroke-width="1"/>
 <text x="1572.5" y="890.8" font-family="Liberation Sans" font-size="11" fill="#111" text-anchor="middle" textLength="11" lengthAdjust="spacingAndGlyphs">17</text>
 <rect x="1595" y="858" width="1" height="42" fill="#c4c4c4"/>
</svg>
<!--/BOTTOM-->
<!--DOC-->
<svg class="a" style="left:0;top:0" width="1600" height="900" viewBox="0 0 1600 900">
<text x="124" y="243.5" font-family="Liberation Sans" font-size="15.8" textLength="50.5" lengthAdjust="spacingAndGlyphs" fill="#222">Jawab:</text>
<text x="279.5" y="279.4" font-family="Liberation Sans" font-size="15.8" textLength="118" lengthAdjust="spacingAndGlyphs" fill="#222">Gunakan rumus</text>
<text x="124" y="346" font-family="Liberation Sans" font-size="15.8" textLength="54" lengthAdjust="spacingAndGlyphs" fill="#222">dengan</text>
<text x="124" y="386.5" font-family="Liberation Sans" font-size="15.8" textLength="79" lengthAdjust="spacingAndGlyphs" fill="#222">Kita hitung</text>
<text x="124" y="654" font-family="Liberation Sans" font-size="15.8" textLength="29" lengthAdjust="spacingAndGlyphs" fill="#222">Jadi</text>
<text x="470" y="308" font-family="Liberation Serif" font-size="11.6" font-style="italic" stroke="#222" stroke-width="0.2" fill="#222">n</text>
<text x="477.6" y="308.5" font-family="Liberation Serif" font-size="10" stroke="#222" stroke-width="0.2" fill="#222">|</text>
<text x="482.5" y="303.8" font-family="Liberation Serif" font-size="16.8" font-style="italic" stroke="#222" stroke-width="0.2" fill="#222">a</text>
<path d="M483.5 292.8 H490" stroke="#222" stroke-width="1.0"/>
<text x="490" y="308" font-family="Liberation Serif" font-size="11.6" font-style="italic" stroke="#222" stroke-width="0.2" fill="#222">x</text>
<text x="504.3" y="304.5" font-family="Liberation Serif" font-size="16.8" stroke="#222" stroke-width="0.2" textLength="11.5" lengthAdjust="spacingAndGlyphs" fill="#222">=</text>
<text x="522" y="303.8" font-family="Liberation Serif" font-size="16.8" font-style="italic" stroke="#222" stroke-width="0.2" fill="#222">v</text>
<text x="531" y="297" font-family="Liberation Serif" font-size="11.6" font-style="italic" stroke="#222" stroke-width="0.2" fill="#222">n</text>
<text x="542" y="308" font-family="Liberation Serif" font-size="11.6" font-style="italic" stroke="#222" stroke-width="0.2" fill="#222">n</text>
<text x="549.5" y="303.8" font-family="Liberation Serif" font-size="16.8" font-style="italic" stroke="#222" stroke-width="0.2" fill="#222">p</text>
<text x="559.5" y="308" font-family="Liberation Serif" font-size="11.6" font-style="italic" stroke="#222" stroke-width="0.2" fill="#222">x</text>
<text x="571" y="303.8" font-family="Liberation Serif" font-size="16.8" font-style="italic" stroke="#222" stroke-width="0.2" fill="#222">a</text>
<path d="M572 292.8 H578.6" stroke="#222" stroke-width="1.0"/>
<text x="580.5" y="308" font-family="Liberation Serif" font-size="11.6" font-style="italic" stroke="#222" stroke-width="0.2" textLength="23.5" lengthAdjust="spacingAndGlyphs" fill="#222">x+n</text>
<text x="182.5" y="346" font-family="Liberation Serif" font-size="16.8" font-style="italic" stroke="#222" stroke-width="0.2" fill="#222">n</text>
<text x="198" y="346.7" font-family="Liberation Serif" font-size="16.8" stroke="#222" stroke-width="0.2" textLength="11.4" lengthAdjust="spacingAndGlyphs" fill="#222">=</text>
<text x="215.5" y="346" font-family="Liberation Serif" font-size="16.8" stroke="#222" stroke-width="0.2" textLength="13" lengthAdjust="spacingAndGlyphs" fill="#222">5,</text>
<text x="233.5" y="346" font-family="Liberation Serif" font-size="16.8" font-style="italic" stroke="#222" stroke-width="0.2" fill="#222">x</text>
<text x="248.5" y="346.7" font-family="Liberation Serif" font-size="16.8" stroke="#222" stroke-width="0.2" textLength="11" lengthAdjust="spacingAndGlyphs" fill="#222">=</text>
<text x="265.5" y="346" font-family="Liberation Serif" font-size="16.8" stroke="#222" stroke-width="0.2" textLength="17.5" lengthAdjust="spacingAndGlyphs" fill="#222">65</text>
<text x="288.5" y="346" font-family="Liberation Sans" font-size="15.8" textLength="26.5" lengthAdjust="spacingAndGlyphs" fill="#222">dan</text>
<text x="319.5" y="346" font-family="Liberation Serif" font-size="16.8" font-style="italic" stroke="#222" stroke-width="0.2" fill="#222">v</text>
<text x="335.5" y="346.7" font-family="Liberation Serif" font-size="16.8" stroke="#222" stroke-width="0.2" textLength="11" lengthAdjust="spacingAndGlyphs" fill="#222">=</text>
<text x="359.5" y="335" font-family="Liberation Serif" font-size="10.5" stroke="#222" stroke-width="0.2" text-anchor="middle" fill="#222">1</text>
<path d="M352 340.3 H375.5" stroke="#222" stroke-width="0.9"/>
<text x="352" y="354.4" font-family="Liberation Serif" font-size="10.5" stroke="#222" stroke-width="0.2" textLength="23.5" lengthAdjust="spacingAndGlyphs" fill="#222">1,05</text>
<text x="375.8" y="346" font-family="Liberation Serif" font-size="16.8" stroke="#222" stroke-width="0.2" fill="#222">.</text>
<text x="381.5" y="433.6" font-family="Liberation Serif" font-size="16.8" font-style="italic" stroke="#222" stroke-width="0.2" fill="#222">a</text>
<path d="M382.5 423.5 H389.5" stroke="#222" stroke-width="1.0"/>
<text x="390" y="437.8" font-family="Liberation Serif" font-size="11.6" font-style="italic" stroke="#222" stroke-width="0.2" textLength="23" lengthAdjust="spacingAndGlyphs" fill="#222">x+5</text>
<text x="420" y="434.2" font-family="Liberation Serif" font-size="16.8" stroke="#222" stroke-width="0.2" textLength="11.8" lengthAdjust="spacingAndGlyphs" fill="#222">=</text>
<path d="M 449.60 413.60 Q 449.20 411.30 447.20 411.90 Q 445.20 412.90 444.90 419.20 L 443.90 441.20 Q 443.40 448.30 441.00 448.20 Q 439.10 448.10 438.60 447.00" fill="none" stroke="#222" stroke-width="1.5" stroke-linecap="round"/>
<text x="451" y="414.5" font-family="Liberation Serif" font-size="11.6" stroke="#222" stroke-width="0.2" textLength="11" lengthAdjust="spacingAndGlyphs" fill="#222">∞</text>
<text x="446" y="450" font-family="Liberation Serif" font-size="11.6" stroke="#222" stroke-width="0.2" fill="#222">0</text>
<text x="462.5" y="433.6" font-family="Liberation Serif" font-size="16.8" font-style="italic" stroke="#222" stroke-width="0.2" fill="#222">v</text>
<text x="472.5" y="428.3" font-family="Liberation Serif" font-size="11.6" font-style="italic" stroke="#222" stroke-width="0.2" fill="#222">t</text>
<text x="483" y="437.5" font-family="Liberation Serif" font-size="11.6" font-style="italic" stroke="#222" stroke-width="0.2" fill="#222">t</text>
<text x="489.5" y="433.6" font-family="Liberation Serif" font-size="16.8" font-style="italic" stroke="#222" stroke-width="0.2" fill="#222">p</text>
<text x="499" y="437.8" font-family="Liberation Serif" font-size="11.6" font-style="italic" stroke="#222" stroke-width="0.2" textLength="21" lengthAdjust="spacingAndGlyphs" fill="#222">x+5</text>
<text x="521.5" y="433.6" font-family="Liberation Serif" font-size="16.8" font-style="italic" stroke="#222" stroke-width="0.2" textLength="16" lengthAdjust="spacingAndGlyphs" fill="#222">dt</text>
<text x="315" y="493.2" font-family="Liberation Serif" font-size="16.8" font-style="italic" stroke="#222" stroke-width="0.2" textLength="30.5" lengthAdjust="spacingAndGlyphs" fill="#222">S(t)</text>
<text x="351.5" y="493.9" font-family="Liberation Serif" font-size="16.8" stroke="#222" stroke-width="0.2" textLength="10.8" lengthAdjust="spacingAndGlyphs" fill="#222">=</text>
<text x="369" y="493.2" font-family="Liberation Serif" font-size="16.8" stroke="#222" stroke-width="0.2" fill="#222">1</text>
<text x="383.5" y="493.2" font-family="Liberation Serif" font-size="16.8" stroke="#222" stroke-width="0.2" textLength="9.8" lengthAdjust="spacingAndGlyphs" fill="#222">−</text>
<text x="412.5" y="479.8" font-family="Liberation Serif" font-size="16.8" font-style="italic" stroke="#222" stroke-width="0.2" text-anchor="middle" fill="#222">t</text>
<path d="M398 487.4 H427" stroke="#222" stroke-width="0.9"/>
<text x="398.5" y="504" font-family="Liberation Serif" font-size="16.8" stroke="#222" stroke-width="0.2" textLength="28.5" lengthAdjust="spacingAndGlyphs" fill="#222">100</text>
<text x="432.8" y="493.9" font-family="Liberation Serif" font-size="16.8" stroke="#222" stroke-width="0.2" textLength="10.8" lengthAdjust="spacingAndGlyphs" fill="#222">=</text>
<text x="450.5" y="479.8" font-family="Liberation Serif" font-size="16.8" stroke="#222" stroke-width="0.2" textLength="45.5" lengthAdjust="spacingAndGlyphs" fill="#222">100 −</text>
<text x="500" y="479.8" font-family="Liberation Serif" font-size="16.8" font-style="italic" stroke="#222" stroke-width="0.2" fill="#222">t</text>
<path d="M449.7 487.4 H506.4" stroke="#222" stroke-width="0.9"/>
<text x="464.5" y="504" font-family="Liberation Serif" font-size="16.8" stroke="#222" stroke-width="0.2" textLength="28.5" lengthAdjust="spacingAndGlyphs" fill="#222">100</text>
<text x="508.5" y="493.2" font-family="Liberation Serif" font-size="16.8" stroke="#222" stroke-width="0.2" fill="#222">,</text>
<text x="524.5" y="493.2" font-family="Liberation Serif" font-size="16.8" stroke="#222" stroke-width="0.2" fill="#222">0</text>
<text x="538" y="493.2" font-family="Liberation Serif" font-size="16.8" stroke="#222" stroke-width="0.2" textLength="12" lengthAdjust="spacingAndGlyphs" fill="#222">&lt;</text>
<text x="555.5" y="493.2" font-family="Liberation Serif" font-size="16.8" font-style="italic" stroke="#222" stroke-width="0.2" fill="#222">t</text>
<text x="567.5" y="493.2" font-family="Liberation Serif" font-size="16.8" stroke="#222" stroke-width="0.2" textLength="12" lengthAdjust="spacingAndGlyphs" fill="#222">&lt;</text>
<text x="585.5" y="493.2" font-family="Liberation Serif" font-size="16.8" stroke="#222" stroke-width="0.2" textLength="18.5" lengthAdjust="spacingAndGlyphs" fill="#222">30</text>
<text x="303" y="551" font-family="Liberation Serif" font-size="11.6" font-style="italic" stroke="#222" stroke-width="0.2" fill="#222">t</text>
<text x="309.8" y="548.3" font-family="Liberation Serif" font-size="16.8" font-style="italic" stroke="#222" stroke-width="0.2" fill="#222">p</text>
<text x="320.8" y="551.5" font-family="Liberation Serif" font-size="11.6" font-style="italic" stroke="#222" stroke-width="0.2" textLength="19.5" lengthAdjust="spacingAndGlyphs" fill="#222">x+5</text>
<text x="346.4" y="549.0" font-family="Liberation Serif" font-size="16.8" stroke="#222" stroke-width="0.2" textLength="11.6" lengthAdjust="spacingAndGlyphs" fill="#222">=</text>
<text x="364" y="534.2" font-family="Liberation Serif" font-size="16.8" font-style="italic" stroke="#222" stroke-width="0.2" textLength="91" lengthAdjust="spacingAndGlyphs" fill="#222">S(x + 5 + t)</text>
<path d="M364 542.7 H455.9" stroke="#222" stroke-width="0.9"/>
<text x="377.5" y="558.6" font-family="Liberation Serif" font-size="16.8" font-style="italic" stroke="#222" stroke-width="0.2" textLength="63" lengthAdjust="spacingAndGlyphs" fill="#222">S(x + 5)</text>
<text x="460.8" y="549.0" font-family="Liberation Serif" font-size="16.8" stroke="#222" stroke-width="0.2" textLength="10.8" lengthAdjust="spacingAndGlyphs" fill="#222">=</text>
<text x="477.5" y="534.2" font-family="Liberation Serif" font-size="16.8" font-style="italic" stroke="#222" stroke-width="0.2" textLength="70" lengthAdjust="spacingAndGlyphs" fill="#222">S(70 + t)</text>
<path d="M477.5 542.7 H547.7" stroke="#222" stroke-width="0.9"/>
<text x="491" y="558.6" font-family="Liberation Serif" font-size="16.8" font-style="italic" stroke="#222" stroke-width="0.2" textLength="42.5" lengthAdjust="spacingAndGlyphs" fill="#222">S(70)</text>
<text x="553.7" y="549.0" font-family="Liberation Serif" font-size="16.8" stroke="#222" stroke-width="0.2" textLength="11.5" lengthAdjust="spacingAndGlyphs" fill="#222">=</text>
<text x="572" y="534.2" font-family="Liberation Serif" font-size="16.8" stroke="#222" stroke-width="0.2" textLength="35" lengthAdjust="spacingAndGlyphs" fill="#222">30 −</text>
<text x="611.5" y="534.2" font-family="Liberation Serif" font-size="16.8" font-style="italic" stroke="#222" stroke-width="0.2" fill="#222">t</text>
<path d="M570.4 542.7 H617.8" stroke="#222" stroke-width="0.9"/>
<text x="585.8" y="558.6" font-family="Liberation Serif" font-size="16.8" stroke="#222" stroke-width="0.2" textLength="18.5" lengthAdjust="spacingAndGlyphs" fill="#222">30</text>
<text x="271.3" y="607" font-family="Liberation Serif" font-size="16.8" font-style="italic" stroke="#222" stroke-width="0.2" fill="#222">a</text>
<path d="M272.3 596.5 H279" stroke="#222" stroke-width="1.0"/>
<text x="280" y="611" font-family="Liberation Serif" font-size="11.6" font-style="italic" stroke="#222" stroke-width="0.2" textLength="23" lengthAdjust="spacingAndGlyphs" fill="#222">x+5</text>
<text x="309.5" y="607.7" font-family="Liberation Serif" font-size="16.8" stroke="#222" stroke-width="0.2" textLength="11.8" lengthAdjust="spacingAndGlyphs" fill="#222">=</text>
<path d="M 340.00 584.90 Q 339.60 582.60 337.60 583.20 Q 335.60 584.20 335.30 590.50 L 334.30 612.50 Q 333.80 619.60 331.40 619.50 Q 329.50 619.40 329.00 618.30" fill="none" stroke="#222" stroke-width="1.5" stroke-linecap="round"/>
<text x="343.5" y="588.5" font-family="Liberation Serif" font-size="11.6" stroke="#222" stroke-width="0.2" textLength="11" lengthAdjust="spacingAndGlyphs" fill="#222">∞</text>
<text x="338" y="623" font-family="Liberation Serif" font-size="11.6" stroke="#222" stroke-width="0.2" fill="#222">0</text>
<text x="354" y="607" font-family="Liberation Serif" font-size="16.8" font-style="italic" stroke="#222" stroke-width="0.2" fill="#222">v</text>
<text x="364" y="601.5" font-family="Liberation Serif" font-size="11.6" font-style="italic" stroke="#222" stroke-width="0.2" fill="#222">t</text>
<text x="373.3" y="611" font-family="Liberation Serif" font-size="11.6" font-style="italic" stroke="#222" stroke-width="0.2" fill="#222">t</text>
<text x="379.8" y="607" font-family="Liberation Serif" font-size="16.8" font-style="italic" stroke="#222" stroke-width="0.2" fill="#222">p</text>
<text x="389.5" y="611" font-family="Liberation Serif" font-size="11.6" font-style="italic" stroke="#222" stroke-width="0.2" textLength="21.5" lengthAdjust="spacingAndGlyphs" fill="#222">x+5</text>
<text x="412.3" y="607" font-family="Liberation Serif" font-size="16.8" font-style="italic" stroke="#222" stroke-width="0.2" textLength="16.5" lengthAdjust="spacingAndGlyphs" fill="#222">dt</text>
<text x="435" y="607.7" font-family="Liberation Serif" font-size="16.8" stroke="#222" stroke-width="0.2" textLength="11.8" lengthAdjust="spacingAndGlyphs" fill="#222">=</text>
<path d="M 464.50 584.90 Q 464.10 582.60 462.10 583.20 Q 460.10 584.20 459.80 590.50 L 458.80 612.50 Q 458.30 619.60 455.90 619.50 Q 454.00 619.40 453.50 618.30" fill="none" stroke="#222" stroke-width="1.5" stroke-linecap="round"/>
<text x="466.3" y="589.5" font-family="Liberation Serif" font-size="11.6" stroke="#222" stroke-width="0.2" textLength="13.5" lengthAdjust="spacingAndGlyphs" fill="#222">30</text>
<text x="462" y="623" font-family="Liberation Serif" font-size="11.6" stroke="#222" stroke-width="0.2" fill="#222">0</text>
<text x="480" y="607" font-family="Liberation Serif" font-size="16.8" font-style="italic" stroke="#222" stroke-width="0.2" fill="#222">v</text>
<text x="490.5" y="601.5" font-family="Liberation Serif" font-size="11.6" font-style="italic" stroke="#222" stroke-width="0.2" fill="#222">t</text>
<path d="M508 584.5 Q500.6 592 500.8 601.5 Q501 611 507.6 618.2 M555.8 584.5 Q563.2 592 563 601.5 Q562.8 611 556.2 618.2" fill="none" stroke="#222" stroke-width="1.25"/>
<text x="508.5" y="593.3" font-family="Liberation Serif" font-size="16.8" stroke="#222" stroke-width="0.2" textLength="35.5" lengthAdjust="spacingAndGlyphs" fill="#222">30 −</text>
<text x="548.5" y="593.3" font-family="Liberation Serif" font-size="16.8" font-style="italic" stroke="#222" stroke-width="0.2" fill="#222">t</text>
<path d="M508.5 601.5 H555" stroke="#222" stroke-width="1.1"/>
<text x="522.5" y="617.5" font-family="Liberation Serif" font-size="16.8" stroke="#222" stroke-width="0.2" textLength="18.5" lengthAdjust="spacingAndGlyphs" fill="#222">30</text>
<text x="567" y="607" font-family="Liberation Serif" font-size="16.8" font-style="italic" stroke="#222" stroke-width="0.2" textLength="15.5" lengthAdjust="spacingAndGlyphs" fill="#222">dt</text>
<text x="589.3" y="607.7" font-family="Liberation Serif" font-size="16.8" stroke="#222" stroke-width="0.2" textLength="11" lengthAdjust="spacingAndGlyphs" fill="#222">=</text>
<text x="606" y="607" font-family="Liberation Serif" font-size="16.8" stroke="#222" stroke-width="0.2" textLength="40.5" lengthAdjust="spacingAndGlyphs" fill="#222">9,733</text>
<text x="343.3" y="694" font-family="Liberation Serif" font-size="11.6" stroke="#222" stroke-width="0.2" fill="#222">5</text>
<text x="350" y="694.5" font-family="Liberation Serif" font-size="10" stroke="#222" stroke-width="0.2" fill="#222">|</text>
<text x="355.2" y="690" font-family="Liberation Serif" font-size="16.8" font-style="italic" stroke="#222" stroke-width="0.2" fill="#222">a</text>
<path d="M356 679.5 H363.5" stroke="#222" stroke-width="1.0"/>
<text x="364.5" y="694" font-family="Liberation Serif" font-size="11.6" stroke="#222" stroke-width="0.2" textLength="12" lengthAdjust="spacingAndGlyphs" fill="#222">65</text>
<text x="383.8" y="690.7" font-family="Liberation Serif" font-size="16.8" stroke="#222" stroke-width="0.2" textLength="11.8" lengthAdjust="spacingAndGlyphs" fill="#222">=</text>
<text x="400.5" y="690" font-family="Liberation Serif" font-size="16.8" font-style="italic" stroke="#222" stroke-width="0.2" fill="#222">v</text>
<text x="410.5" y="684" font-family="Liberation Serif" font-size="11.6" stroke="#222" stroke-width="0.2" fill="#222">5</text>
<text x="419.5" y="694" font-family="Liberation Serif" font-size="11.6" stroke="#222" stroke-width="0.2" fill="#222">5</text>
<text x="425.5" y="690" font-family="Liberation Serif" font-size="16.8" font-style="italic" stroke="#222" stroke-width="0.2" fill="#222">p</text>
<text x="434" y="694" font-family="Liberation Serif" font-size="11.6" stroke="#222" stroke-width="0.2" textLength="12.5" lengthAdjust="spacingAndGlyphs" fill="#222">65</text>
<text x="454.3" y="690" font-family="Liberation Serif" font-size="16.8" font-style="italic" stroke="#222" stroke-width="0.2" fill="#222">a</text>
<path d="M455.3 679.5 H462.5" stroke="#222" stroke-width="1.0"/>
<text x="463.5" y="694" font-family="Liberation Serif" font-size="11.6" stroke="#222" stroke-width="0.2" textLength="30" lengthAdjust="spacingAndGlyphs" fill="#222">65+5</text>
<text x="501" y="690.7" font-family="Liberation Serif" font-size="16.8" stroke="#222" stroke-width="0.2" textLength="11" lengthAdjust="spacingAndGlyphs" fill="#222">=</text>
<text x="517.3" y="690" font-family="Liberation Serif" font-size="16.8" stroke="#222" stroke-width="0.2" textLength="60.5" lengthAdjust="spacingAndGlyphs" fill="#222">6536,68</text>
</svg>
<!--/DOC-->
<div class="t" style="left:278px;top:206px;font-size:9.2px;color:#6a6a6a">16</div>
<div class="t" style="left:296px;top:206px;font-size:9.2px;color:#6a6a6a">/</div>
<div class="t" style="left:304px;top:206px;font-size:9.2px;color:#6a6a6a">16</div>
<div class="t" style="left:461px;top:207px;font-size:8.2px;color:#7a7a7a;letter-spacing:-0.1px">142%</div>

<svg class="a" style="left:0;top:0" width="1600" height="900" viewBox="0 0 1600 900">
<g fill="none" stroke="#6e6e6e" stroke-width="1.4" stroke-linejoin="round">
 <!-- save -->
 <path d="M16.7 206.6 H26 L28.2 208.8 V218.1 H16.7 Z"/><path d="M19.5 206.6 V210.5 H25 V206.6"/><rect x="19" y="213.5" width="6.8" height="4.6" fill="#d6d6d6" stroke="none"/><path d="M16.7 213.2 H28.2"/>
 <!-- star -->
 <path d="M51.3 205.6 L53.5 210.6 L58.6 211 L54.7 214.4 L56 219 L51.3 216.4 L46.6 219 L47.9 214.4 L44 211 L49.1 210.6 Z"/>
 <!-- cloud upload -->
 <path d="M77.8 217 H76 Q73.5 217 73.5 213.8 Q73.5 211 76.5 210.8 Q77 206.3 80.6 206.3 Q84.6 206.3 85 210.6 Q87.7 211 87.7 213.8 Q87.7 217 85 217 H83.4"/><path d="M80.6 219.4 V211.5 M77.6 214.2 L80.6 211.2 L83.6 214.2"/>
 <!-- print -->
 <rect x="104.5" y="205.6" width="9.2" height="3.6" fill="#6e6e6e"/><path d="M102.5 209.5 H115.5 V215.5 H102.5 Z" fill="#6e6e6e"/><rect x="104.8" y="213" width="8.7" height="5.5" fill="#fafafa" stroke="#6e6e6e" stroke-width="1.2"/>
 <!-- search -->
 <circle cx="137.6" cy="211.3" r="5.6"/><path d="M141.6 215.3 L146 219.6" stroke-width="1.8"/><circle cx="135.3" cy="211.3" r="0.6" fill="#6e6e6e" stroke="none"/><circle cx="137.6" cy="211.3" r="0.6" fill="#6e6e6e" stroke="none"/><circle cx="139.9" cy="211.3" r="0.6" fill="#6e6e6e" stroke="none"/>
 <!-- up/down -->
 <circle cx="223.2" cy="212.2" r="6.6" stroke-width="1.5"/><path d="M223.2 216.5 V208.6 M220.4 211.2 L223.2 208.4 L226 211.2" stroke-width="1.6"/>
 <circle cx="251.8" cy="212.2" r="6.6" stroke="#c4c4c4" stroke-width="1.3"/><path d="M251.8 208 V215.8 M249 213.2 L251.8 216 L254.6 213.2" stroke="#c4c4c4" stroke-width="1.3"/>
 <path d="M272 221.3 H292.2" stroke="#dedede" stroke-width="1"/>
 <path d="M326.5 203 V221" stroke="#e2e2e2" stroke-width="1"/>
 <!-- pointer -->
 <path d="M344.3 205.5 L352.4 213.4 L348.6 213.6 L350.8 218 L349 218.8 L346.8 214.4 L344.3 216.8 Z" fill="#555" stroke="#555" stroke-width="0.6"/>
 <!-- hand -->
 <path d="M371.5 214.5 L370.2 212.3 Q369.6 210.8 371 210.6 L372.5 212 V206.8 Q372.5 205.6 373.6 205.6 Q374.6 205.6 374.6 206.8 V205.6 Q374.6 204.5 375.7 204.5 Q376.8 204.5 376.8 205.6 V206 Q376.8 205 377.9 205 Q379 205 379 206.2 V207 Q379 206 380.1 206 Q381.2 206 381.2 207.2 V214 Q381.2 219.5 376.2 219.5 Q373.3 219.5 371.5 214.5 Z" stroke="#3d7fd6" stroke-width="1.3"/><path d="M374.6 206 V211 M376.8 205.8 V211 M379 206.6 V211" stroke="#3d7fd6" stroke-width="1.1"/>
 <!-- minus/plus -->
 <circle cx="405.8" cy="212.2" r="6.6" stroke-width="1.4"/><path d="M402.3 212.2 H409.3" stroke-width="1.5"/>
 <circle cx="434.3" cy="212.2" r="6.6" stroke-width="1.4"/><path d="M430.8 212.2 H437.8 M434.3 208.7 V215.7" stroke-width="1.5"/>
 <path d="M456.4 221.3 H501.4" stroke="#dedede" stroke-width="1"/>
 <path d="M493 211 H497.2 L495.1 213.6 Z" fill="#777" stroke="none"/>
 <!-- fit page blue -->
 <path d="M517.2 204 V207.6 H528.4 V204" stroke="#3d7fd6" stroke-width="1.5"/><path d="M517.2 219.6 V210 H523 L526.6 213.6 V219.6" stroke="#3d7fd6" stroke-width="1.5"/><path d="M519 217.6 H525.6 M519 217.6 L520.3 216.4 M525.6 217.6 L524.3 216.4" stroke="#3d7fd6" stroke-width="1"/>
 <path d="M533.6 211.8 H537 L535.3 214 Z" fill="#3d7fd6" stroke="none"/>
 <!-- keyboard/scroll -->
 <rect x="553" y="206.2" width="14.4" height="4.8" rx="0.8" stroke-width="1.4"/><path d="M555.5 208.6 H565" stroke-width="0.9" stroke-dasharray="1.2 0.9"/><path d="M560.2 211 V218.6 M557.2 215.8 L560.2 218.8 L563.2 215.8" stroke-width="1.4"/>
 <path d="M581.8 202.5 V221" stroke="#e2e2e2" stroke-width="1"/>
 <!-- pencil -->
 <path d="M596.6 218.6 L597.4 214.8 L606.2 206 Q607.2 205 608.2 206 L609.2 207 Q610.2 208 609.2 209 L600.4 217.8 Z"/><path d="M598 215 L601 218 M604.8 207.6 L607.6 210.4" stroke-width="1"/>
 <!-- eraser -->
 <path d="M625 214.6 L634.6 205.8 L639.6 210.8 L630.6 219 H627.5 L625 216.6 Z"/><path d="M629 211 L633.6 215.6" stroke-width="1.1"/><path d="M630 219.4 H637.5" stroke="#aaa" stroke-width="1"/>
 <!-- fill -->
 <path d="M655 211.5 L660.3 206.3 L665.5 211.5 L660.3 216.8 Z" stroke="#a8a8a8" stroke-width="1.3"/><path d="M657.5 204.6 L660.3 207.3" stroke="#a8a8a8" stroke-width="1.2"/><path d="M667.7 214 Q669 216.2 667.7 217.4 Q666.4 216.2 667.7 214Z" fill="#a8a8a8" stroke="#a8a8a8" stroke-width="0.8"/>
 <!-- lines -->
 <path d="M682.6 206.6 H696.4" stroke="#b0b0b0" stroke-width="0.9" stroke-dasharray="2 1.5"/><path d="M682.6 209.3 H696.4 M682.6 212.3 H696.4" stroke="#b0b0b0" stroke-width="1.1"/><path d="M682.6 216.2 H696.4" stroke="#b0b0b0" stroke-width="1.9"/>
 <!-- highlighter -->
 <path d="M713 218.2 L714.8 215 L723 206.6 Q724 205.6 725 206.6 L725.6 207.2 Q726.6 208.2 725.6 209.2 L717.2 217.4 Z"/><path d="M716 216.5 L712.5 218.8" stroke="#555" stroke-width="1.6"/><path d="M716 219 H726.6" stroke="#cfcfcf" stroke-width="1.8"/>
 <!-- link cloud -->
 <path d="M877.5 209 L880 206.5 Q881.8 204.7 883.6 206.5 Q885.4 208.3 883.6 210.1 L881.1 212.6 Q879.3 214.4 877.5 212.6" stroke-width="1.3"/><path d="M880 211.5 L877.5 214 Q875.7 215.8 873.9 214 Q872.1 212.2 873.9 210.4 L876.4 207.9 Q878.2 206.1 880 207.9" stroke-width="1.3"/><path d="M879.3 219 Q878.6 216.2 881 215.8 Q882 213.6 884.4 214.2 Q886 214.8 886 216.6 Q888.2 216.8 887.8 219 Z" fill="#6e6e6e" stroke="none"/>
 <!-- envelope -->
 <rect x="902.5" y="206.7" width="13" height="10.2" stroke-width="1.4"/><path d="M902.8 207 L909 212.5 L915.2 207 M902.8 216.6 L907.5 211.6 M915.2 216.6 L910.5 211.6" stroke-width="1"/>
 <!-- person plus -->
 <circle cx="935.6" cy="208" r="2.8" fill="#6e6e6e" stroke="none"/><path d="M930 215.8 Q930 211.6 935.6 211.6 Q938.6 211.6 939.8 213 L938.8 215.8 Z" fill="#6e6e6e" stroke="none"/><circle cx="941.8" cy="216" r="4.2" fill="#6e6e6e" stroke="#fafafa" stroke-width="1"/><path d="M939.7 216 H943.9 M941.8 213.9 V218.1" stroke="#fafafa" stroke-width="1.2"/>
</g>
<!-- right panel icons -->
<g fill="none" stroke-width="1.3" stroke-linejoin="round">
 <circle cx="939" cy="242" r="5" stroke="#666" stroke-width="1.5"/><path d="M942.6 245.6 L946.2 249" stroke="#666" stroke-width="1.8"/><path d="M939 239.6 V244.4 M937 240.6 L935.8 242 L937 243.4" stroke="#666" stroke-width="1"/>
 <path d="M930 258.3 H950" stroke="#e2e2e2" stroke-width="1"/>
 <path d="M934 266.6 H940 L943 269.6 V273 M940.5 281 H934 V266.6" stroke="#d8384a"/><circle cx="944.2" cy="277.5" r="3.6" fill="#d8384a" stroke="#fafafa" stroke-width="0.8"/><path d="M942.3 277.5 H946.1 M944.2 275.6 V279.4" stroke="#fff" stroke-width="1"/>
 <path d="M933 297.4 H938 L939.5 299 V306 H933 Z" stroke="#5b5bd6"/><path d="M940.5 297 H945.3 L947.8 299.5 V306 H940.5 Z" fill="#5b5bd6" stroke="#5b5bd6"/><path d="M940 305 V309.5 M937.6 307.2 L940 310.8 L942.4 307.2" stroke="#5b5bd6" stroke-width="1.6"/>
 <rect x="932.8" y="327.8" width="13.6" height="4.8" rx="0.8" stroke="#d0509a" fill="#f0c6e0"/><rect x="932.8" y="335.4" width="5.6" height="5.4" rx="0.6" stroke="#d0509a" fill="#f0c6e0"/><path d="M940.6 336.4 H946.6 M940.6 339.4 H946.6" stroke="#e2a0c8" stroke-width="1.1"/>
 <path d="M934.5 358.6 H942.5 L945.6 361.6 V371.2 H934.5 Z" stroke="#c040c0" fill="#f6dcf6"/><path d="M936.5 366 H938.5 M940.5 366 H942.5 M936.5 368.6 H938.5 M940.5 368.6 H942.5" stroke="#c040c0" stroke-width="1.2"/>
 <path d="M933 400.5 L934 396.5 L941 389.4 Q942.4 388 943.8 389.4 Q945.2 390.8 943.8 392.2 L936.8 399.5 Z" stroke="#7a50d0" stroke-width="1.4"/><path d="M936.5 400.6 Q939 398 940 400 Q941 401.6 942.5 399.2 Q943.6 401.8 947 400.4" stroke="#7a50d0" stroke-width="1.2"/>
 <path d="M934.2 418.6 H940.5 L943.4 421.5 V424.6 M940 432.2 H934.2 V418.6" stroke="#2a8a88"/><circle cx="944.2" cy="428.8" r="3.6" fill="#2a8a88" stroke="#fafafa" stroke-width="0.8"/><path d="M942.4 428.8 H946 M944.6 427.2 L946.2 428.8 L944.6 430.4" stroke="#fff" stroke-width="0.9"/>
 <rect x="941.2" y="449.4" width="5.4" height="12.2" stroke="#8cc83c" fill="#e4f4cc"/><path d="M933.8 453.6 V461.4 H939.4 M933.8 456.8 H939.4" stroke="#8cc83c" stroke-dasharray="1.5 1"/><path d="M934 449.4 L938.6 454 M934 453.2 V449.4 H937.8" stroke="#5aa82a" stroke-width="1.4"/>
 <path d="M933.6 478.2 H939.6 L943 481.6 V484.5 M940 492.8 H933.6 V478.2" stroke="#d8b020" fill="#fbf0c4"/><rect x="940.4" y="485.4" width="7.2" height="6.2" fill="#d8b020" stroke="#d8b020"/><path d="M942.4 488.4 H945.8" stroke="#fff" stroke-width="0.8"/>
 <path d="M933.6 509.6 H946.4 V519 H938 L935.6 522.6 V519 H933.6 Z" fill="#d8b020" stroke="#d8b020"/><path d="M936.5 513.2 H943.5 M936.5 515.8 H943.5" stroke="#fff" stroke-width="1"/>
 <path d="M936.6 539.8 H942 L943.8 541.6 V544.6 H936.6 Z" stroke="#3cb048"/><path d="M933 544.6 H947.2 V550.2 H933 Z" fill="#3cb048" stroke="#3cb048"/><rect x="936.4" y="548.6" width="7.4" height="5" fill="#fafafa" stroke="#3cb048"/>
 <path d="M940.2 569.6 L946 572 V577 Q946 582 940.2 584.4 Q934.4 582 934.4 577 V572 Z" stroke="#6a6ad8" stroke-width="1.5" fill="#dcdcf6"/><path d="M940.2 570 V584" stroke="#6a6ad8" stroke-width="0.8"/>
 <path d="M934.4 612.6 L940.6 606.4 Q939.6 603 942 601.4 Q943.6 600.4 945.2 600.8 L943 603 L943.6 604.6 L945.2 605.2 L947.4 603 Q947.8 604.8 946.6 606.4" stroke="#666" stroke-width="1.7"/><circle cx="943.8" cy="610.2" r="4" fill="#fafafa" stroke="#666" stroke-width="1.4"/><path d="M941.8 610.2 H945.8 M943.8 608.2 V612.2" stroke="#666" stroke-width="1.1"/>
 <path d="M930 681 H950" stroke="#e2e2e2" stroke-width="1"/>
 <path d="M937.7 691 V703" stroke="#6e6e6e" stroke-width="1.6"/><path d="M940 697 H946.5 M943.8 694.5 L946.5 697 L943.8 699.5" stroke="#6e6e6e" stroke-width="1.5"/>
</g>
</svg>
</body></html>
